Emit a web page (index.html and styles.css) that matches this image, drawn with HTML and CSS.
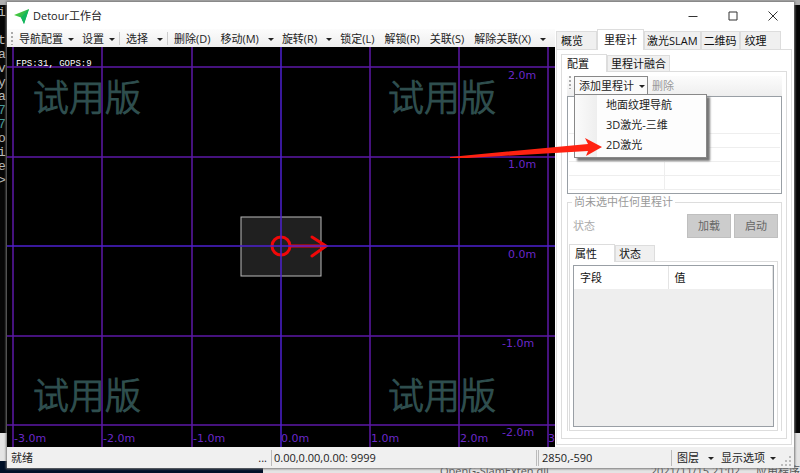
FILE: index.html
```html
<!DOCTYPE html>
<html lang="zh-CN">
<head>
    <meta charset="UTF-8">
    <meta name="viewport" content="width=device-width, initial-scale=1.0">
    <title>Detour工作台</title>
    <link rel="stylesheet" href="styles.css">
</head>
<body>
    <div class="desktop">
        <!-- windows behind the workbench -->
        <pre class="console">i

t
a
v
y
a
<b>7</b>
<b>7</b>
o
i
e
&gt;</pre>
        <div class="explorer">
            <div class="explorer-dark"></div>
            <div class="explorer-row">
                <span class="file-name">OpenG-SlamExten.dll</span>
                <span class="file-date">2021/11/15 21:02</span>
                <span>应用程序</span>
            </div>
        </div>

        <main class="window">
            <header class="titlebar">
                <svg class="logo" viewBox="0 0 16 16">
                    <defs>
                        <linearGradient id="plane" x1="0" y1="0" x2="1" y2="1">
                            <stop offset="0" stop-color="#5bd62c"/>
                            <stop offset="1" stop-color="#08a070"/>
                        </linearGradient>
                    </defs>
                    <path d="M15 1 L0 7 L7 9.5 L10 16 Z" fill="url(#plane)"/>
                    <path d="M15 1 L7 9.5 L10 16 Z" fill="#12b85c"/>
                </svg>
                <h1>Detour工作台</h1>
                <div class="window-buttons">
                    <button aria-label="最小化"><svg viewBox="0 0 10 10"><path d="M0.5 5.5H9.5"/></svg></button>
                    <button aria-label="最大化"><svg viewBox="0 0 10 10"><path d="M1 1H9V9H1Z"/></svg></button>
                    <button aria-label="关闭"><svg viewBox="0 0 10 10"><path d="M0.5 0.5L9.5 9.5M9.5 0.5L0.5 9.5"/></svg></button>
                </div>
            </header>

            <div class="content">
                <section class="workspace">
                    <nav class="toolbar">
                        <span class="grip"></span>
                        <button class="drop">导航配置</button>
                        <button class="drop">设置</button>
                        <span class="separator"></span>
                        <button class="drop split">选择</button>
                        <span class="separator"></span>
                        <button>删除(D)</button>
                        <button class="drop split">移动(M)</button>
                        <button class="drop split">旋转(R)</button>
                        <button>锁定(L)</button>
                        <button>解锁(R)</button>
                        <button>关联(S)</button>
                        <button class="drop split">解除关联(X)</button>
                    </nav>
                    <div class="map">
                        <svg viewBox="0 0 548 400" preserveAspectRatio="xMidYMid slice">
                            <g class="watermark">
                                <text x="26" y="64">试用版</text>
                                <text x="381" y="64">试用版</text>
                                <text x="26" y="362">试用版</text>
                                <text x="381" y="362">试用版</text>
                            </g>
                            <rect class="robot" x="234" y="170" width="80" height="59"/>
                            <g class="heading">
                                <circle cx="274" cy="199" r="9"/>
                                <path d="M283 199H318M305 190L319 199L305 209"/>
                            </g>
                            <g class="grid">
                                <path d="M6 0V400M95 0V400M185 0V400M363 0V400M452 0V400M541 0V400"/>
                                <path d="M0 20H548M0 110H548M0 289H548M0 378H548"/>
                                <path class="axis" d="M274 0V400M0 199H548"/>
                            </g>
                            <g class="scale">
                                <text x="7" y="395">-3.0m</text>
                                <text x="96" y="395">-2.0m</text>
                                <text x="186" y="395">-1.0m</text>
                                <text x="274" y="395">0.0m</text>
                                <text x="364" y="395">1.0m</text>
                                <text x="453" y="395">2.0m</text>
                                <text x="541" y="395">3.0m</text>
                                <text x="501" y="32">2.0m</text>
                                <text x="501" y="121">1.0m</text>
                                <text x="501" y="211">0.0m</text>
                                <text x="495" y="300">-1.0m</text>
                                <text x="495" y="389">-2.0m</text>
                            </g>
                            <text class="fps" x="9" y="19">FPS:31, GOPS:9</text>
                        </svg>
                    </div>
                </section>

                <aside class="panel">
                    <div class="tabs main-tabs">
                        <button>概览</button>
                        <button class="active">里程计</button>
                        <button>激光SLAM</button>
                        <button>二维码</button>
                        <button>纹理</button>
                    </div>
                    <div class="tab-page main-page">
                        <div class="tabs">
                            <button class="active wide">配置</button>
                            <button>里程计融合</button>
                        </div>
                        <div class="tab-page config-page">
                            <div class="panel-toolbar">
                                <span class="grip"></span>
                                <div class="menu-wrap">
                                    <button class="drop open">添加里程计</button>
                                    <div class="menu">
                                        <button>地面纹理导航</button>
                                        <button>3D激光-三维</button>
                                        <button>2D激光</button>
                                    </div>
                                </div>
                                <button class="disabled" disabled>删除</button>
                            </div>
                            <div class="list">
                                <table>
                                    <tr class="head"><td></td><td></td></tr>
                                    <tr><td></td><td></td></tr>
                                    <tr><td></td><td></td></tr>
                                    <tr><td></td><td></td></tr>
                                    <tr><td></td><td></td></tr>
                                </table>
                            </div>
                            <fieldset class="group">
                                <legend>尚未选中任何里程计</legend>
                                <div class="state-row">
                                    <span>状态</span>
                                    <button disabled>加载</button>
                                    <button disabled>启动</button>
                                </div>
                                <div class="tabs">
                                    <button class="active wide">属性</button>
                                    <button class="state-tab">状态</button>
                                </div>
                                <div class="tab-page props-page">
                                    <div class="props">
                                        <table>
                                            <tr><th>字段</th><th>值</th></tr>
                                        </table>
                                    </div>
                                </div>
                            </fieldset>
                        </div>
                    </div>
                </aside>
            </div>

            <footer class="statusbar">
                <span>就绪</span>
                <span class="dots">...</span>
                <span class="pose">0.00,0.00,0.00: 9999</span>
                <span class="cursor">2850,-590</span>
                <button class="drop layers">图层</button>
                <button class="drop">显示选项</button>
                <svg class="resize" viewBox="0 0 10 10">
                    <path d="M8 0h2v2h-2zM4 4h2v2h-2zM8 4h2v2h-2zM0 8h2v2h-2zM4 8h2v2h-2zM8 8h2v2h-2z"/>
                </svg>
            </footer>
        </main>

        <svg class="pointer" viewBox="0 0 152 20">
            <path d="M0 19L0 21L138 13L136 18L152 9L135 0L138 6Z"/>
        </svg>
    </div>
</body>
</html>
```

FILE: styles.css
```css
* {
    box-sizing: border-box;
}

body {
    margin: 0;
    font-family: "Open Sans", "Noto Sans CJK SC", sans-serif;
    font-size: 11px;
    line-height: 16px;
    color: #222;
}

button {
    font: inherit;
    color: inherit;
    border: 0;
    padding: 0;
    background: none;
    white-space: nowrap;
}

svg {
    display: block;
}

.desktop {
    position: relative;
    height: 100vh;
    overflow: hidden;
    background: linear-gradient(#b0b0b0 5px, #060606 5px);
}

.console {
    position: absolute;
    left: -2px;
    top: 6px;
    margin: 0;
    font-family: "Liberation Mono", monospace;
    font-size: 13px;
    line-height: 14px;
    color: #bbb;
}

.console b {
    font-weight: normal;
    color: #4a9a9a;
}

.explorer {
    position: absolute;
    left: 0;
    right: 0;
    bottom: 0;
    height: 40px;
    overflow: hidden;
    background-color: #e4e4e4;
}

.explorer-dark {
    position: absolute;
    left: 0;
    bottom: 0;
    width: 263px;
    height: 12px;
    background-color: #001028;
}

.explorer-row {
    display: flex;
    padding: 30px 0 0 440px;
    color: #555;
}

.file-name {
    flex: 1;
}

.file-date {
    margin-right: 16px;
}

/* application window */

.window {
    position: absolute;
    top: 2px;
    right: 6px;
    bottom: 5px;
    left: 7px;
    display: flex;
    flex-direction: column;
    background-color: #fff;
    box-shadow: 0 0 2px 1px #777;
}

.titlebar {
    display: flex;
    align-items: center;
    height: 27px;
    padding: 0 16px 0 7px;
}

.logo {
    width: 16px;
    height: 16px;
    margin-right: 3px;
}

h1 {
    flex: 1;
    margin: 0;
    font-size: 11px;
    font-weight: normal;
}

.window-buttons {
    display: flex;
    gap: 30px;
}

.window-buttons svg {
    width: 10px;
    height: 10px;
    fill: none;
    stroke: #333;
}

.content {
    display: flex;
    flex: 1;
    min-height: 0;
}

.workspace {
    display: flex;
    flex-direction: column;
    flex: 1;
    min-width: 0;
}

.toolbar {
    display: flex;
    align-items: center;
    height: 18px;
    padding: 1px 2px 0;
    overflow: hidden;
    background: linear-gradient(#fcfcfc, #eee);
}

.toolbar button {
    padding: 0 5px;
}

.toolbar .drop {
    padding-right: 3px;
}

.grip {
    flex: none;
    width: 2px;
    height: 13px;
    margin: 0 1px 0 2px;
    background: repeating-linear-gradient(#aaa 0 2px, transparent 2px 4px);
}

.separator {
    flex: none;
    width: 1px;
    height: 13px;
    margin: 0 1px;
    background-color: #ccc;
}

.drop::after {
    content: "";
    display: inline-block;
    margin-left: 5px;
    vertical-align: 2px;
    border: 3px solid transparent;
    border-top-color: #222;
    border-bottom: 0;
}

.drop.split::after {
    margin-left: 9px;
}

.map {
    flex: 1;
    min-height: 0;
    background-color: #000;
}

.map svg {
    width: 100%;
    height: 100%;
}

.watermark {
    font-family: "Noto Sans CJK SC", sans-serif;
    font-size: 36px;
    font-weight: 300;
    fill: #2f4f4f;
    stroke: #2f4f4f;
}

.grid path {
    fill: none;
    stroke: #5c18a6;
    stroke-width: 1.5;
}

.grid .axis {
    stroke: #4c20d0;
}

.robot {
    fill: #202020;
    stroke: #bbb;
    stroke-width: 1;
}

.heading {
    fill: none;
    stroke: #f00808;
    stroke-width: 3;
    stroke-linecap: round;
}

.scale {
    font-family: "DejaVu Sans", sans-serif;
    font-size: 11px;
    fill: #6a28c8;
}

.fps {
    font-family: "Liberation Mono", monospace;
    font-size: 9px;
    fill: #fff;
}

/* right panel */

.panel {
    display: flex;
    flex-direction: column;
    flex: none;
    width: 239px;
    padding: 0 2px 2px 1px;
}

.tabs {
    display: flex;
    align-items: flex-end;
}

.tabs button {
    position: relative;
    height: 16px;
    padding: 0 3px;
    border: 1px solid #ddd;
    border-bottom: 0;
    background-color: #f0f0f0;
    color: #111;
}

.tabs .active {
    z-index: 1;
    height: 18px;
    margin-bottom: -1px;
    background-color: #fff;
}

.tabs .wide {
    padding: 0 17px 0 5px;
}

.tabs .state-tab {
    padding-right: 13px;
}

.main-tabs button {
    height: 18px;
    padding: 0 2px;
}

.main-tabs button:first-child,
.main-tabs button:last-child {
    padding: 0 13px 0 4px;
}

.main-tabs .active {
    height: 21px;
    padding: 0 6px;
}

.tab-page {
    display: flex;
    flex-direction: column;
    flex: 1;
    min-height: 0;
    border: 1px solid #ddd;
    background-color: #fff;
}

.main-page {
    padding: 4px 4px 5px;
}

.config-page {
    padding: 4px 4px 7px 5px;
}

.panel-toolbar {
    display: flex;
    align-items: flex-start;
    height: 20px;
    background: linear-gradient(#fcfcfc, #eee);
}

.menu-wrap {
    position: relative;
    margin-left: 2px;
}

.open {
    display: block;
    height: 19px;
    padding: 0 2px 0 4px;
    border: 1px solid #888;
    border-bottom: 0;
    background-color: #fafafa;
}

.disabled {
    height: 19px;
    padding: 0 4px;
    color: #999;
}

.menu {
    position: absolute;
    top: 18px;
    left: 0;
    z-index: 2;
    display: flex;
    flex-direction: column;
    width: 133px;
    padding-bottom: 2px;
    border: 1px solid #888;
    background: linear-gradient(90deg, #fbfbfb, #eee 22px, #fdfdfd 22px);
    box-shadow: 3px 3px 2px #777;
}

.menu button {
    height: 20px;
    padding-left: 31px;
    text-align: left;
}

.list {
    height: 98px;
    padding: 1px;
    border: 1px solid #999fa5;
    overflow: hidden;
}

table {
    width: 100%;
    border-collapse: collapse;
    table-layout: fixed;
}

.list td {
    height: 14px;
    padding: 0;
    border-bottom: 1px solid #eee;
    border-right: 1px solid #eee;
}

.list td:first-child {
    width: 95px;
}

.list td:last-child {
    border-right: 0;
}

.list .head td {
    height: 35px;
}

.group {
    display: flex;
    flex-direction: column;
    flex: 1;
    min-width: 0;
    min-height: 0;
    margin: 0;
    padding: 4px 3px 0 1px;
    border: 1px solid #ddd;
    border-bottom: 0;
}

legend {
    margin-left: 3px;
    padding: 0 2px;
    color: #999;
}

.state-row {
    display: flex;
    align-items: center;
    gap: 3px;
    height: 24px;
    margin-bottom: 6px;
    padding-left: 4px;
    color: #aaa;
}

.state-row span {
    flex: 1;
}

.state-row button {
    width: 44px;
    height: 24px;
    border: 1px solid #bfbfbf;
    background-color: #ccc;
    color: #666;
}

.props-page {
    padding: 3px;
}

.props {
    flex: 1;
    border: 1px solid #999fa5;
    background-color: #eee;
}

.props th {
    height: 23px;
    padding: 0 6px;
    background-color: #fff;
    border-right: 1px solid #e4e4e4;
    text-align: left;
    font-weight: normal;
    color: #111;
}

.props th:first-child {
    width: 94px;
}

/* status bar */

.statusbar {
    display: flex;
    align-items: center;
    height: 21px;
    padding: 0 3px 0 4px;
    background-color: #f0f0f0;
}

.dots {
    flex: 1;
    margin-right: 4px;
    text-align: right;
}

.pose {
    width: 266px;
    padding-left: 2px;
    border: 1px solid #bbb;
    border-width: 0 1px;
}

.cursor {
    width: 134px;
    margin-left: 1px;
    padding-left: 3px;
    border: 1px solid #bbb;
    border-width: 0 1px;
}

.statusbar button {
    padding-left: 5px;
}

.statusbar .layers::after {
    margin-left: 9px;
}

.statusbar .layers {
    padding-right: 2px;
}

.resize {
    width: 10px;
    height: 10px;
    margin: 6px 0 0 5px;
    fill: #bbb;
}

/* annotation arrow over the menu */

.pointer {
    position: absolute;
    top: 138px;
    right: 198px;
    z-index: 3;
    width: 152px;
    height: 20px;
    fill: #f21;
}
```
